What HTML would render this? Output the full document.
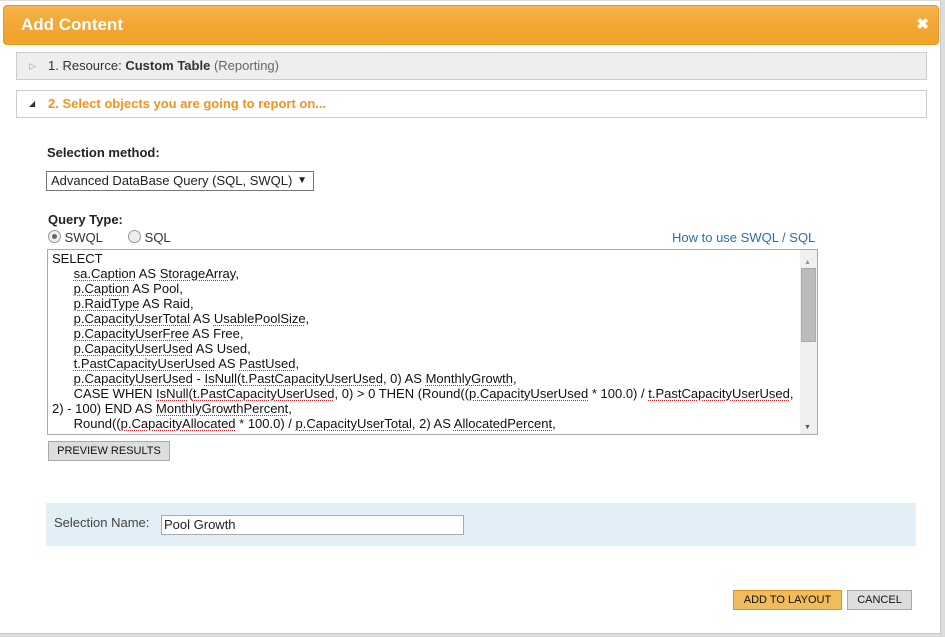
<!DOCTYPE html>
<html><head><style>
body{margin:0;width:945px;height:637px;background:#dcdcdc;font-family:"Liberation Sans",Arial,sans-serif;position:relative;overflow:hidden}
.dlg{position:absolute;left:0;top:0;width:940px;height:632px;background:#fff;border-right:1px solid #c8c8c8;border-bottom:1px solid #c8c8c8;border-top:1px solid #ddd}
.hdr{position:absolute;left:3px;top:4px;width:934px;height:38px;border:1px solid #e8961c;border-radius:4px;background:linear-gradient(#f7b450,#f3a632 50%,#f2a42c);color:#fff;font-weight:bold;font-size:17px;line-height:38px}
.hdr span{position:absolute;left:17px}
.hdr .x{left:auto;right:9px;font-size:15px}
.bar{position:absolute;left:16px;width:909px;height:26px;border:1px solid #ccc;font-size:13px;line-height:26px;color:#333}
.a{position:absolute;font-size:13px;color:#222}
.ta{position:absolute;left:47px;top:248px;width:769px;height:184px;border:1px solid #aaa;overflow:hidden;font-size:13px;line-height:15px;color:#111}
.ta pre{margin:0;padding:1px 4px;font-family:inherit;white-space:pre}
.u{text-decoration:underline dotted #e02020;text-decoration-thickness:1px;text-underline-offset:2px}
.sb{position:absolute;right:0;top:0;width:17px;height:184px;background:#f0f0f0}
.btn{position:absolute;height:18px;border:1px solid #aaa;background:#ddd;font-size:11px;line-height:18px;text-align:center;color:#111}
.radio{display:inline-block;width:11px;height:11px;border:1px solid #999;border-radius:50%;background:#eee;vertical-align:-1px;position:relative}
</style></head><body>
<div class="dlg">
<div class="hdr"><span>Add Content</span><span class="x">✖</span></div>
<div class="bar" style="top:51px;background:#eee"><span style="position:absolute;left:12px;color:#999;font-size:9px">▷</span><span style="position:absolute;left:31px">1. Resource: <b>Custom Table</b> <span style="color:#666">(Reporting)</span></span></div>
<div class="bar" style="top:89px;background:#fff"><span style="position:absolute;left:12px;color:#333;font-size:8px">◢</span><span style="position:absolute;left:31px;color:#f0941e;font-weight:bold">2. Select objects you are going to report on...</span></div>
<div class="a" style="left:47px;top:144px;font-weight:bold">Selection method:</div>
<div class="a" style="left:46px;top:170px;border:1px solid #777;line-height:18px;padding-left:4px;box-sizing:border-box;width:268px;height:20px">Advanced DataBase Query (SQL, SWQL)<span style="position:absolute;right:6px;font-size:10px">▼</span></div>
<div class="a" style="left:48px;top:211px;font-weight:bold">Query Type:</div>
<div class="a" style="left:48px;top:229px;color:#333"><span class="radio"><span style="position:absolute;left:3px;top:3px;width:5px;height:5px;border-radius:50%;background:#666"></span></span> SWQL <span style="display:inline-block;width:22px"></span><span class="radio"></span> SQL</div>
<div class="a" style="left:672px;top:229px;color:#2e6ea6">How to use SWQL / SQL</div>
<div class="ta"><pre>SELECT
      <span class="u">sa.Caption</span> AS <span class="u">StorageArray</span>,
      <span class="u">p.Caption</span> AS Pool,
      <span class="u">p.RaidType</span> AS Raid,
      <span class="u">p.CapacityUserTotal</span> AS <span class="u">UsablePoolSize</span>,
      <span class="u">p.CapacityUserFree</span> AS Free,
      <span class="u">p.CapacityUserUsed</span> AS Used,
      <span class="u">t.PastCapacityUserUsed</span> AS <span class="u">PastUsed</span>,
      <span class="u">p.CapacityUserUsed</span> - <span class="u">IsNull</span>(<span class="u">t.PastCapacityUserUsed</span>, 0) AS <span class="u">MonthlyGrowth</span>,
      CASE WHEN <span class="u">IsNull</span>(<span class="u">t.PastCapacityUserUsed</span>, 0) &gt; 0 THEN (Round((<span class="u">p.CapacityUserUsed</span> * 100.0) / <span class="u">t.PastCapacityUserUsed</span>,
2) - 100) END AS <span class="u">MonthlyGrowthPercent</span>,
      Round((<span class="u">p.CapacityAllocated</span> * 100.0) / <span class="u">p.CapacityUserTotal</span>, 2) AS <span class="u">AllocatedPercent</span>,</pre>
<div class="sb"><div style="position:absolute;left:4px;top:5px;font-size:7px;color:#999">▲</div><div style="position:absolute;left:1px;top:18px;width:13px;height:72px;background:#bcbcbc;border:1px solid #aaa"></div><div style="position:absolute;left:4px;top:170px;font-size:7px;color:#555">▼</div></div>
</div>
<div class="btn" style="left:48px;top:440px;width:120px">PREVIEW RESULTS</div>
<div style="position:absolute;left:46px;top:502px;width:870px;height:43px;background:#e3eff7"></div>
<div class="a" style="left:54px;top:514px;color:#444">Selection Name:</div>
<div class="a" style="left:161px;top:514px;border:1px solid #aaa;background:#fff;line-height:18px;padding-left:2px;box-sizing:border-box;width:303px;height:20px">Pool Growth</div>
<div class="btn" style="left:733px;top:589px;width:107px;background:#f0bc5c;border-color:#e0901a">ADD TO LAYOUT</div>
<div class="btn" style="left:847px;top:589px;width:63px">CANCEL</div>
</div>
</body></html>
